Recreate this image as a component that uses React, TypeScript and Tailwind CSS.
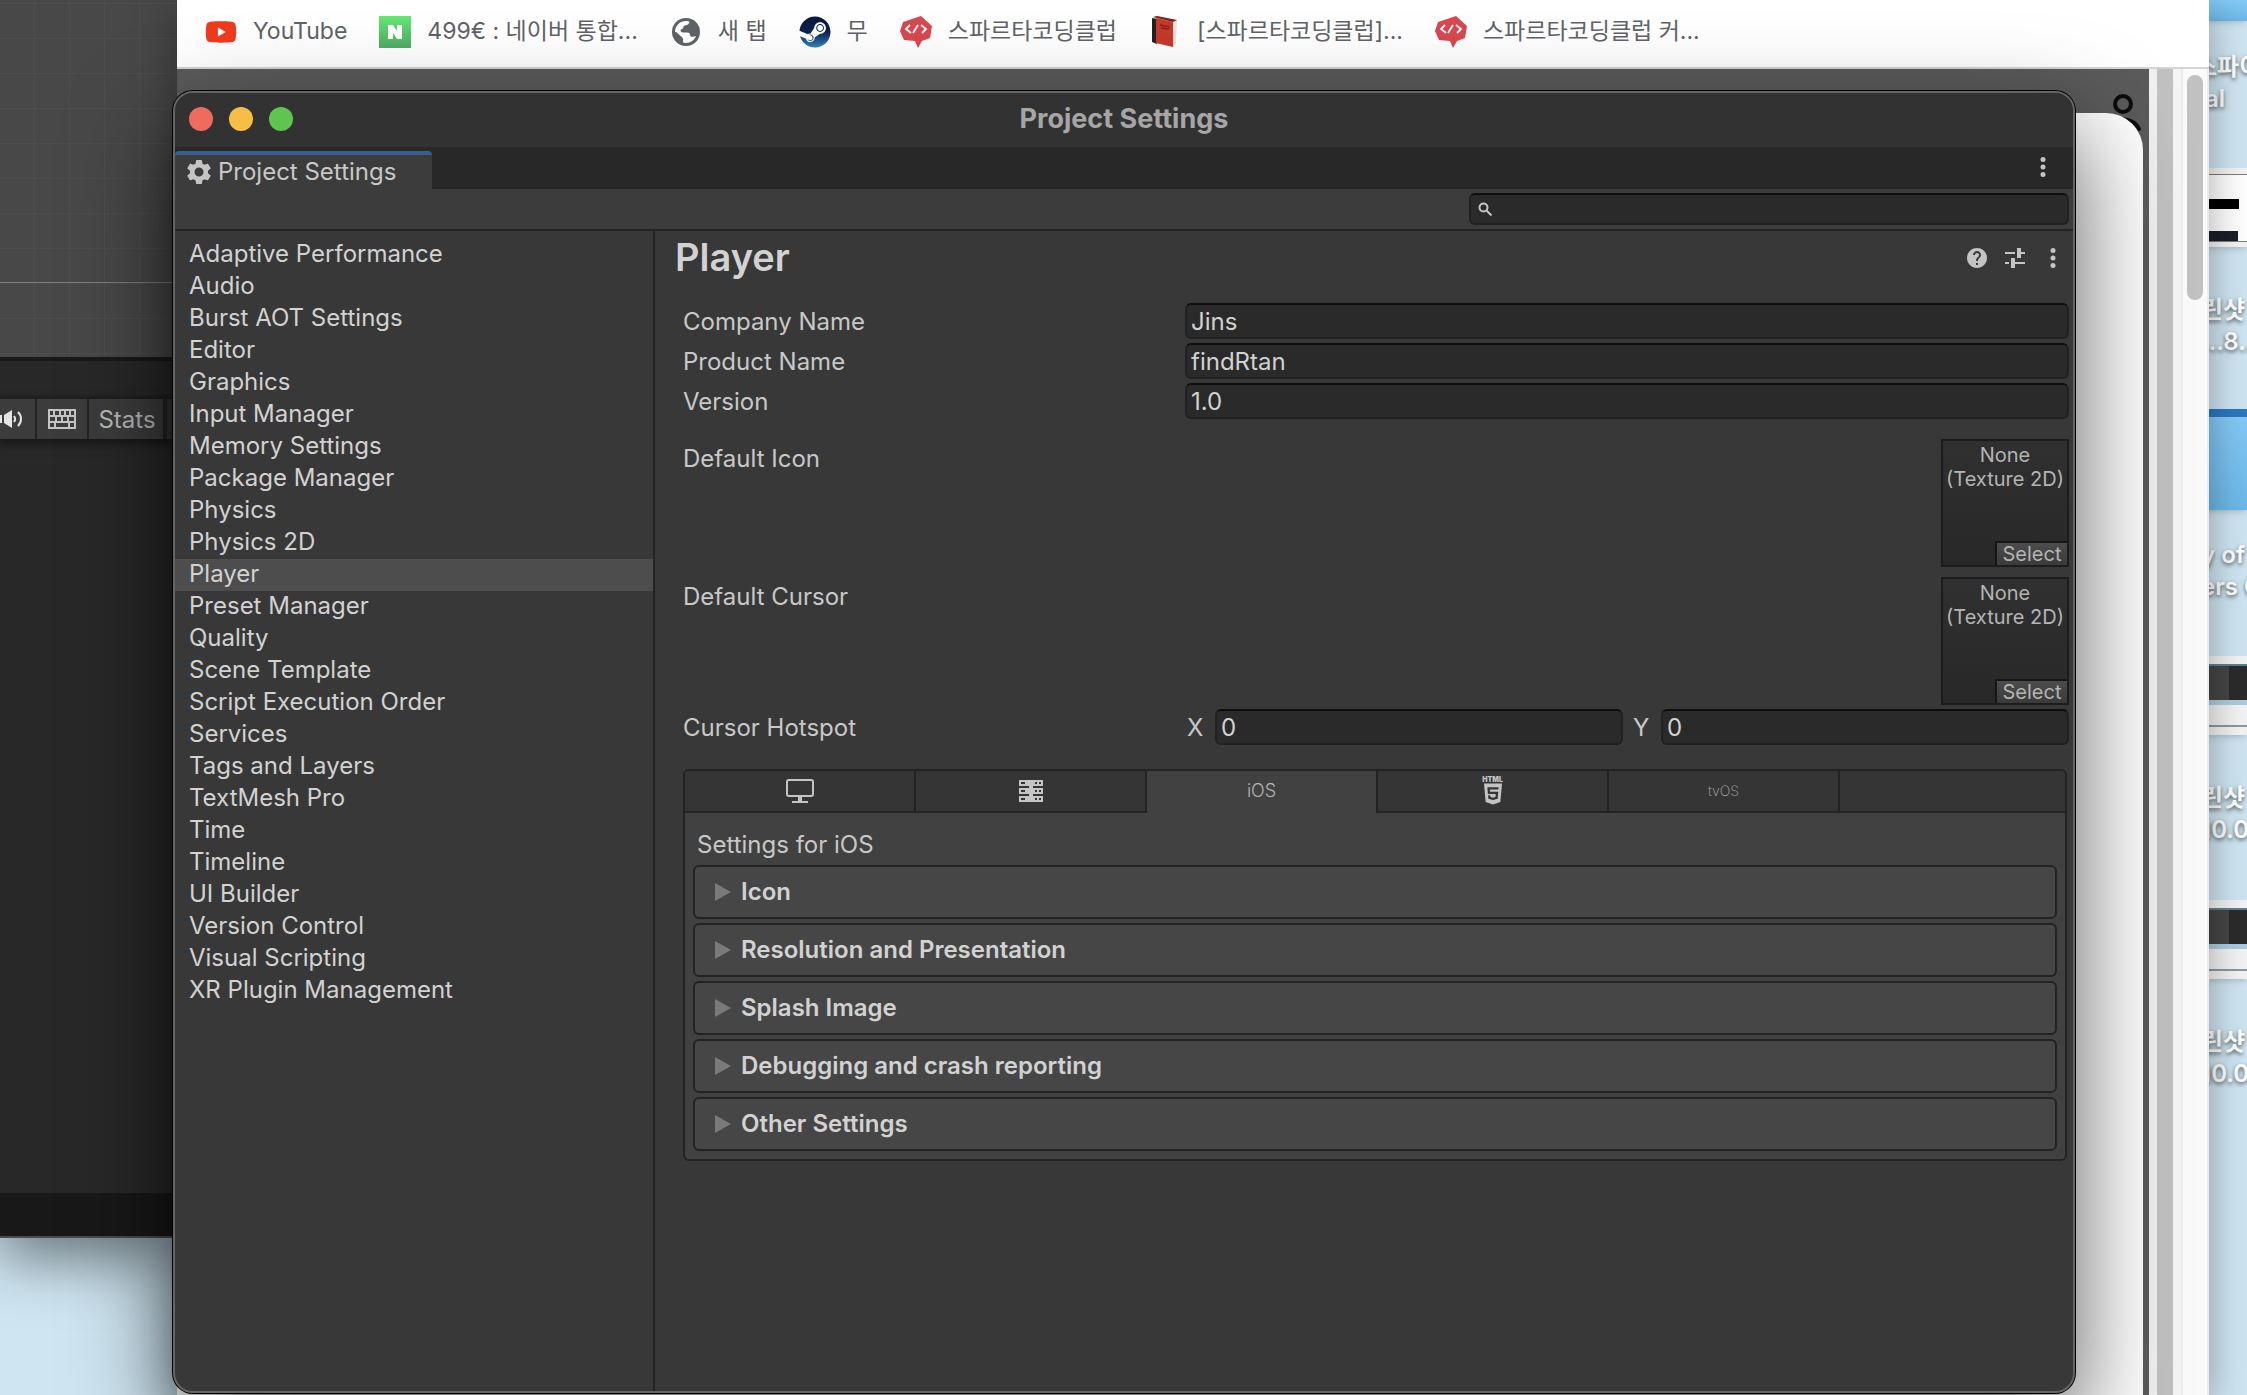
import React, { useState } from 'react';
import { FaHtml5, FaSteam, FaYoutube } from 'react-icons/fa';
import { MdHelp, MdSettings } from 'react-icons/md';

interface Bookmark {
  label: string;
  icon: React.ReactNode;
}

interface PlatformTab {
  id: string;
  label: string;
  content: React.ReactNode;
}

const categories: string[] = [
  'Adaptive Performance',
  'Audio',
  'Burst AOT Settings',
  'Editor',
  'Graphics',
  'Input Manager',
  'Memory Settings',
  'Package Manager',
  'Physics',
  'Physics 2D',
  'Player',
  'Preset Manager',
  'Quality',
  'Scene Template',
  'Script Execution Order',
  'Services',
  'Tags and Layers',
  'TextMesh Pro',
  'Time',
  'Timeline',
  'UI Builder',
  'Version Control',
  'Visual Scripting',
  'XR Plugin Management',
];

const sections: string[] = [
  'Icon',
  'Resolution and Presentation',
  'Splash Image',
  'Debugging and crash reporting',
  'Other Settings',
];

function NaverIcon() {
  return (
    <span className="flex h-8 w-8 items-center justify-center bg-linear-to-b from-[#66e874] to-[#4eab63]">
      <svg viewBox="0 0 16 16" className="h-4 w-4" fill="#fff">
        <path d="M1 1h5l4 6V1h5v14h-5L6 9v6H1z" />
      </svg>
    </span>
  );
}

function GlobeIcon() {
  return (
    <svg viewBox="0 0 32 32" className="h-8 w-8">
      <circle cx="16" cy="16" r="14" fill="#5f6368" />
      <path
        d="M5 16C5 9.500 10 5 16 5c1.500 0 2.500.3 3.500.6-.2 2-1.200 3.400-3.500 3.600-2.300.1-2.600 1-2.700 2.600-.1 1.400-2.700 1-2.700 2.700s1 1.900 2.600 1.900h4.200c2 0 2.700 1.200 2.700 2.700s1.200 1.700 2.600 1.700c1.300 0 1.700-.6 3.300-.8C24.500 24 20.700 27 16 27c-1 0-2-.2-3-.5v-3.300c0-1.600-1.200-2-2.200-2.900L6.600 16.300z"
        fill="#fff"
      />
    </svg>
  );
}

function SteamIcon() {
  return (
    <span className="relative block h-8 w-8 rounded-full">
      <svg className="absolute h-0 w-0" aria-hidden="true">
        <defs>
          <linearGradient id="steam" x1="0" y1="0" x2="0" y2="1">
            <stop offset="0" stopColor="#0b1a3b" />
            <stop offset="0.5" stopColor="#0d2150" />
            <stop offset="1" stopColor="#2f86bd" />
          </linearGradient>
        </defs>
      </svg>
      <FaSteam className="h-8 w-8" fill="url(#steam)" />
    </span>
  );
}

function SpartaIcon() {
  return (
    <svg viewBox="0 0 32 32" className="h-8 w-8" fill="none">
      <path d="M3 6 21 0l11 10-2 12-8 3-4 7-3-7-11-1L0 15z" fill="#d9474f" />
      <path d="m10 9-4 4 5 4M21 9l5 4-4 4M18 9l-5 8" stroke="#fff" strokeWidth="1.800" />
    </svg>
  );
}

function BookIcon() {
  return (
    <svg viewBox="0 0 32 32" className="h-8 w-8">
      <path d="m4 1 4-1 20 4-1 24-3 3L5 27z" fill="#e8e4dc" />
      <path d="m3 2 5 1v25l-5-2z" fill="#222" />
      <path d="m7 2 17 4v25L7 27z" fill="#c5392c" />
      <path d="m4 1 20 5 4-2-20-4z" fill="#7b231c" />
      <path d="m11 9 10 2M12 12l8 1" stroke="#8c231b" strokeWidth="1.500" />
    </svg>
  );
}

const bookmarks: Bookmark[] = [
  {
    label: 'YouTube',
    icon: (
      <span className="relative flex h-8 w-8 items-center justify-center">
        <span className="absolute h-3 w-3 bg-white" />
        <FaYoutube className="relative h-8 w-8 text-[#f03a1d]" />
      </span>
    ),
  },
  { label: '499€ : 네이버 통합...', icon: <NaverIcon /> },
  { label: '새 탭', icon: <GlobeIcon /> },
  { label: '무', icon: <SteamIcon /> },
  { label: '스파르타코딩클럽', icon: <SpartaIcon /> },
  { label: '[스파르타코딩클럽]...', icon: <BookIcon /> },
  { label: '스파르타코딩클럽 커...', icon: <SpartaIcon /> },
];

function MoreIcon() {
  return (
    <svg viewBox="0 0 6 20" className="h-5 w-[6px]" fill="#c4c4c4">
      <circle cx="3" cy="2.500" r="2.500" />
      <circle cx="3" cy="10" r="2.500" />
      <circle cx="3" cy="17.500" r="2.500" />
    </svg>
  );
}

function PresetIcon() {
  return (
    <svg viewBox="0 0 20 20" className="h-5 w-5" fill="#c4c4c4">
      <path d="M0 4h10v2H0zM12 0h4v4h4v2h-4v4h-4zM0 14h4v2H0zM6 10h4v4h10v2H10v4H6z" />
    </svg>
  );
}

function MonitorIcon() {
  return (
    <svg viewBox="0 0 28 24" className="h-6 w-7" fill="none" stroke="#c4c4c4" strokeWidth="2">
      <rect x="1" y="1" width="26" height="16" rx="2" />
      <path d="M14 17v5" strokeWidth="4" />
      <path d="M6 23h16" />
    </svg>
  );
}

function ServerIcon() {
  return (
    <svg viewBox="0 0 24 22" className="h-[22px] w-6">
      <path d="M0 0h24v6H14v2h10v6H14v2h10v6H0v-6h10v-2H0V8h10V6H0z" fill="#c4c4c4" />
      <path
        d="M2 2h4v2H2zM16 2h2v2h-2zM20 2h2v2h-2zM2 10h4v2H2zM16 10h2v2h-2zM20 10h2v2h-2zM2 18h4v2H2zM16 18h2v2h-2zM20 18h2v2h-2z"
        fill="#353535"
      />
    </svg>
  );
}

const platforms: PlatformTab[] = [
  { id: 'desktop', label: 'Windows, Mac, Linux', content: <MonitorIcon /> },
  { id: 'server', label: 'Dedicated Server', content: <ServerIcon /> },
  { id: 'ios', label: 'iOS', content: <span className="pb-[2px] text-lg font-light text-[#b4b4b4]">iOS</span> },
  {
    id: 'webgl',
    label: 'WebGL',
    content: (
      <span className="flex flex-col items-center text-[#c4c4c4]">
        <span className="text-[7px] leading-[5px] font-black">HTML</span>
        <FaHtml5 className="h-6 w-6" />
      </span>
    ),
  },
  { id: 'tvos', label: 'tvOS', content: <span className="text-sm font-extralight text-[#b0b0b0]">tvOS</span> },
];

function Folder({ className }: { className: string }) {
  return <div className={`w-full bg-linear-to-b from-[#84caf6] to-[#6cb8e8] shadow-md ${className}`} />;
}

function Screenshot({ className }: { className: string }) {
  return (
    <div className={`flex h-[79px] w-full flex-col bg-[#f4f4f4] pt-2 shadow-md ${className}`}>
      <div className="ml-[14px] flex h-9 border-t-2 border-[#5f7f96] bg-[#2b2b2b]">
        <div className="w-5 bg-[#454545]" />
      </div>
      <div className="h-[5px] bg-[#a9cfe4]" />
      <div className="mt-5 h-[2px] bg-[#8a9aa3]" />
    </div>
  );
}

interface DesktopLabelProps {
  first: string;
  second: string;
  className: string;
}

function DesktopLabel({ first, second, className }: DesktopLabelProps) {
  return (
    <p
      className={`text-2xl leading-8 font-semibold whitespace-nowrap text-white [text-shadow:0_2px_4px_rgba(0,0,0,0.6)] ${className}`}
    >
      {first}
      <br />
      {second}
    </p>
  );
}

function DesktopIcons() {
  return (
    <div className="absolute top-0 right-0 flex w-[52px] flex-col">
      <Folder className="h-[21px]" />
      <div className="mt-[30px] text-2xl leading-8 font-semibold whitespace-nowrap text-white [text-shadow:0_2px_4px_rgba(0,0,0,0.6)]">
        <p>스파이</p>
        <p className="pl-[10px]">al</p>
      </div>
      <div className="mt-[53px] h-[79px] bg-[#f4f4f4] pt-[6px] pl-[14px] shadow-md">
        <div className="flex h-[68px] flex-col justify-between border-y border-[#7d7d7d] bg-white pt-6">
          <div className="h-[10px] w-[30px] bg-black" />
          <div className="h-[10px] w-[29px] bg-[#1b1f2a]" />
        </div>
      </div>
      <DesktopLabel first="린샷" second="...8.." className="mt-[47px] pl-[6px]" />
      <Folder className="mt-[51px] h-[101px] border-t-8 border-[#2b78c2]" />
      <DesktopLabel first="y of" second="ers C" className="mt-[29px] pl-[6px]" />
      <Screenshot className="mt-[53px]" />
      <DesktopLabel first="린샷" second="10.0" className="mt-[47px] pl-[6px]" />
      <Screenshot className="mt-[54px]" />
      <DesktopLabel first="린샷" second="10.0" className="mt-[47px] pl-[6px]" />
    </div>
  );
}

function EditorWindow() {
  return (
    <div className="absolute top-0 bottom-[157px] left-0 flex w-[177px] flex-col border-b-2 border-[#4b4b49] bg-[#282828] shadow-[0_20px_60px_rgba(0,0,0,0.5)]">
      <div className="h-[357px] bg-[#484848] bg-[linear-gradient(#4d4d4d_1px,transparent_1px),linear-gradient(90deg,#4d4d4d_1px,transparent_1px)] bg-[size:35px_35px] bg-[position:34px_3px]">
        <div className="h-[283px] border-b border-[#7c7c7c]" />
      </div>
      <div className="h-[42px] border-y-4 border-t-[#191919] border-b-[#232323]" />
      <div className="flex h-10 gap-[2px] bg-[#232323] shadow-[0_4px_10px_rgba(0,0,0,0.5)]">
        <button type="button" aria-label="Mute audio" className="flex w-[35px] items-center bg-[#3c3c3c]">
          <svg viewBox="0 0 24 20" className="h-5 w-6" fill="none" stroke="#e4e4e4" strokeWidth="2">
            <path d="M0 6h2v8H0zM4 6l8-5v18l-8-5z" fill="#e4e4e4" stroke="none" />
            <path d="M14 7c1.500 2 1.500 4 0 6M18 3c4 4 4 10 0 14" />
          </svg>
        </button>
        <button type="button" aria-label="Shortcuts" className="flex w-[50px] items-center justify-center bg-[#3c3c3c]">
          <svg viewBox="0 0 28 20" className="h-5 w-7" fill="none" stroke="#c4c4c4" strokeWidth="2">
            <rect x="1" y="1" width="26" height="18" />
            <path d="M1 7h26M1 13h26M6 1v6M12 1v6M17 1v6M22 1v6M8 7v6M14 7v6M20 7v6M7 13v6M21 13v6" />
          </svg>
        </button>
        <button type="button" className="w-[74px] bg-[#3c3c3c] pt-[2px] pl-[2px] text-2xl text-[#b8b8b8]">
          Stats
        </button>
        <div className="ml-[2px] flex-1 bg-[#333333]" />
      </div>
      <div className="flex-1" />
      <div className="h-[43px] bg-[#181818]" />
    </div>
  );
}

function BrowserWindow() {
  return (
    <div className="absolute top-0 right-[38px] bottom-0 left-[177px] flex flex-col bg-white shadow-[0_10px_40px_rgba(0,0,0,0.35)]">
      <nav className="flex h-[69px] items-center gap-8 border-b-2 border-[#d4d4d4] pb-1 pl-7">
        {bookmarks.map((bookmark, i) => (
          <a key={i} href="#" className="flex items-center gap-4 text-[23px] whitespace-nowrap text-[#5f6368]">
            {bookmark.icon}
            {bookmark.label}
          </a>
        ))}
      </nav>
      <div className="flex flex-1">
        <div className="relative flex-1 bg-[#5b5b5b] pt-11 pr-[6px]">
          <svg viewBox="0 0 40 44" className="absolute top-5 right-[6px] h-11 w-10" fill="none" stroke="#0c0c0c">
            <circle cx="20" cy="15" r="8" strokeWidth="4" />
            <path d="M4 40c6-13 26-13 32 0" strokeWidth="4" strokeLinecap="round" />
          </svg>
          <div className="relative h-full rounded-tr-[37px] bg-white" />
        </div>
        <div className="w-2 bg-[#f0f0f0]" />
        <div className="w-4 bg-[#c1c1c1]" />
        <div className="w-2 bg-[#f4f4f4]" />
        <div className="w-7 border-x-2 border-[#ebebeb] bg-[#fafafa] px-1 pt-[6px]">
          <div className="h-[225px] rounded-full bg-[#c1c1c1]" />
        </div>
      </div>
    </div>
  );
}

const fieldClass =
  'h-9 w-full min-w-0 flex-1 rounded-md border-2 border-[#212121] border-t-[#0d0d0d] bg-[#2a2a2a] px-1 text-2xl text-[#d2d2d2] outline-none';

function TextField({ id, label, value }: { id: string; label: string; value: string }) {
  return (
    <div className="flex items-center">
      <label htmlFor={id} className="w-[502px] pt-[2px]">
        {label}
      </label>
      <input id={id} type="text" defaultValue={value} className={fieldClass} />
    </div>
  );
}

function TextureField({ label }: { label: string }) {
  return (
    <div className="flex justify-between">
      <span className="pt-[2px] leading-9">{label}</span>
      <div className="flex h-32 w-32 flex-col justify-between border-2 border-[#1c1c1c] bg-linear-to-b from-[#303030] to-[#282828] text-center text-xl leading-6 whitespace-nowrap text-[#b4b4b4]">
        <p className="pt-[2px]">
          None
          <br />
          (Texture 2D)
        </p>
        <button
          type="button"
          aria-label={`Select ${label}`}
          className="h-6 w-[72px] self-end border-t-2 border-l-2 border-[#161616] bg-linear-to-b from-[#4c4c4c] to-[#3a3a3a] leading-5"
        >
          Select
        </button>
      </div>
    </div>
  );
}

function SettingsWindow() {
  const [category, setCategory] = useState<string>('Player');
  const [platform, setPlatform] = useState<string>('ios');

  return (
    <div className="absolute top-[91px] right-[172px] bottom-[2px] left-[173px] flex flex-col overflow-hidden rounded-[20px] border-2 border-[#656565] bg-[#383838] text-2xl text-[#c8c8c8] shadow-[0_0_0_1px_#000,0_40px_100px_rgba(0,0,0,0.65)]">
      <header className="flex h-[54px] items-center bg-[#323232] pb-[2px] pl-[14px]">
        <div className="flex gap-4">
          <button type="button" aria-label="Close" className="h-6 w-6 rounded-full bg-[#ef6b5e]" />
          <button type="button" aria-label="Minimize" className="h-6 w-6 rounded-full bg-[#f6be47]" />
          <button type="button" aria-label="Zoom" className="h-6 w-6 rounded-full bg-[#5fc550]" />
        </div>
        <h1 className="flex-1 pr-[118px] text-center text-[27px] leading-[50px] font-bold text-[#a6a6a6]">
          Project Settings
        </h1>
      </header>

      <div className="flex h-[42px] items-end justify-between bg-[#282828] pr-3">
        <button
          type="button"
          className="flex h-[38px] w-[257px] items-center gap-1 rounded-t border-t-4 border-[#355f8c] bg-[#3c3c3c] pl-[9px]"
        >
          <MdSettings className="h-[30px] w-[30px] text-[#c4c4c4]" />
          Project Settings
        </button>
        <button type="button" aria-label="Window menu" className="mb-1 flex h-9 w-9 items-center justify-center">
          <MoreIcon />
        </button>
      </div>

      <div className="flex h-[42px] justify-end border-b-2 border-[#232323] bg-[#3c3c3c] py-1 pr-1">
        <div className="relative w-[600px]">
          <svg viewBox="0 0 16 16" className="absolute top-2 left-2 h-4 w-4" fill="none" stroke="#c4c4c4" strokeWidth="2">
            <circle cx="6.500" cy="6.500" r="4" />
            <path d="m9.500 9.500 5 5" />
          </svg>
          <input
            type="search"
            aria-label="Search settings"
            className="block h-8 w-full rounded-md border-2 border-[#212121] border-t-[#0d0d0d] bg-[#2a2a2a] pr-2 pl-8 text-xl outline-none"
          />
        </div>
      </div>

      <div className="flex min-h-0 flex-1">
        <nav className="flex w-[480px] flex-col border-r-2 border-[#232323] pt-2">
          {categories.map((name) => (
            <button
              key={name}
              type="button"
              onClick={() => setCategory(name)}
              className={`h-8 pb-[2px] pl-[14px] text-left leading-[30px] text-[#d2d2d2] ${category === name ? 'bg-[#4d4d4d]' : ''}`}
            >
              {name}
            </button>
          ))}
        </nav>

        <main className="flex-1">
          <div className="flex h-[54px] items-center justify-between pr-[2px] pl-5">
            <h2 className="pb-[2px] text-[38px] font-semibold text-[#d2d2d2]">{category}</h2>
            <div className="flex gap-[2px]">
              <button type="button" aria-label="Help" className="flex h-9 w-9 items-center justify-center">
                <MdHelp className="h-6 w-6 text-[#c4c4c4]" />
              </button>
              <button type="button" aria-label="Presets" className="flex h-9 w-9 items-center justify-center">
                <PresetIcon />
              </button>
              <button type="button" aria-label="More" className="flex h-9 w-9 items-center justify-center">
                <MoreIcon />
              </button>
            </div>
          </div>

          <div className="flex flex-col pt-[18px] pr-1 pl-7">
            <div className="flex flex-col gap-1">
              <TextField id="company" label="Company Name" value="Jins" />
              <TextField id="product" label="Product Name" value="findRtan" />
              <TextField id="version" label="Version" value="1.0" />
            </div>

            <div className="mt-5 flex flex-col gap-[10px]">
              <TextureField label="Default Icon" />
              <TextureField label="Default Cursor" />
            </div>

            <div className="mt-1 flex items-center">
              <span className="w-[502px] pt-[2px]">Cursor Hotspot</span>
              <div className="flex flex-1 gap-2">
                <div className="flex flex-1 items-center">
                  <label htmlFor="hotspot-x" className="w-[30px] pt-[2px] pl-[2px]">
                    X
                  </label>
                  <input id="hotspot-x" type="text" defaultValue="0" className={fieldClass} />
                </div>
                <div className="flex flex-1 items-center">
                  <label htmlFor="hotspot-y" className="w-[30px] pt-[2px] pl-[2px]">
                    Y
                  </label>
                  <input id="hotspot-y" type="text" defaultValue="0" className={fieldClass} />
                </div>
              </div>
            </div>

            <div className="mt-6 mr-[2px] overflow-hidden rounded-md border-2 border-[#232323] bg-[#414141]">
              <div role="tablist" className="grid h-[42px] grid-cols-[repeat(5,231fr)_225fr]">
                {platforms.map((tab) => (
                  <button
                    key={tab.id}
                    type="button"
                    role="tab"
                    aria-label={tab.label}
                    aria-selected={platform === tab.id}
                    onClick={() => setPlatform(tab.id)}
                    className={`flex items-center justify-center border-r-2 border-[#232323] ${
                      platform === tab.id ? 'bg-[#414141]' : 'border-b-2 bg-[#353535]'
                    }`}
                  >
                    {tab.content}
                  </button>
                ))}
                <div className="border-b-2 border-[#232323] bg-[#353535]" />
              </div>
              <div className="pt-3 pr-2 pb-2 pl-2">
                <p className="pl-1 leading-10">Settings for iOS</p>
                <div className="flex flex-col gap-1">
                  {sections.map((name) => (
                    <button
                      key={name}
                      type="button"
                      aria-expanded="false"
                      className="flex h-[54px] items-center gap-[10px] rounded-md border-2 border-[#232323] bg-[#464646] pl-5 font-semibold text-[#d2d2d2]"
                    >
                      <svg viewBox="0 0 16 18" className="h-[18px] w-4" fill="#7a7a7a">
                        <path d="M0 0l16 9-16 9z" />
                      </svg>
                      {name}
                    </button>
                  ))}
                </div>
              </div>
            </div>
          </div>
        </main>
      </div>
    </div>
  );
}

export default function App() {
  return (
    <div className="relative h-screen w-full overflow-hidden bg-[#cfe6f2] font-['Inter','Noto_Sans_CJK_KR',sans-serif]">
      <DesktopIcons />
      <EditorWindow />
      <BrowserWindow />
      <SettingsWindow />
    </div>
  );
}
